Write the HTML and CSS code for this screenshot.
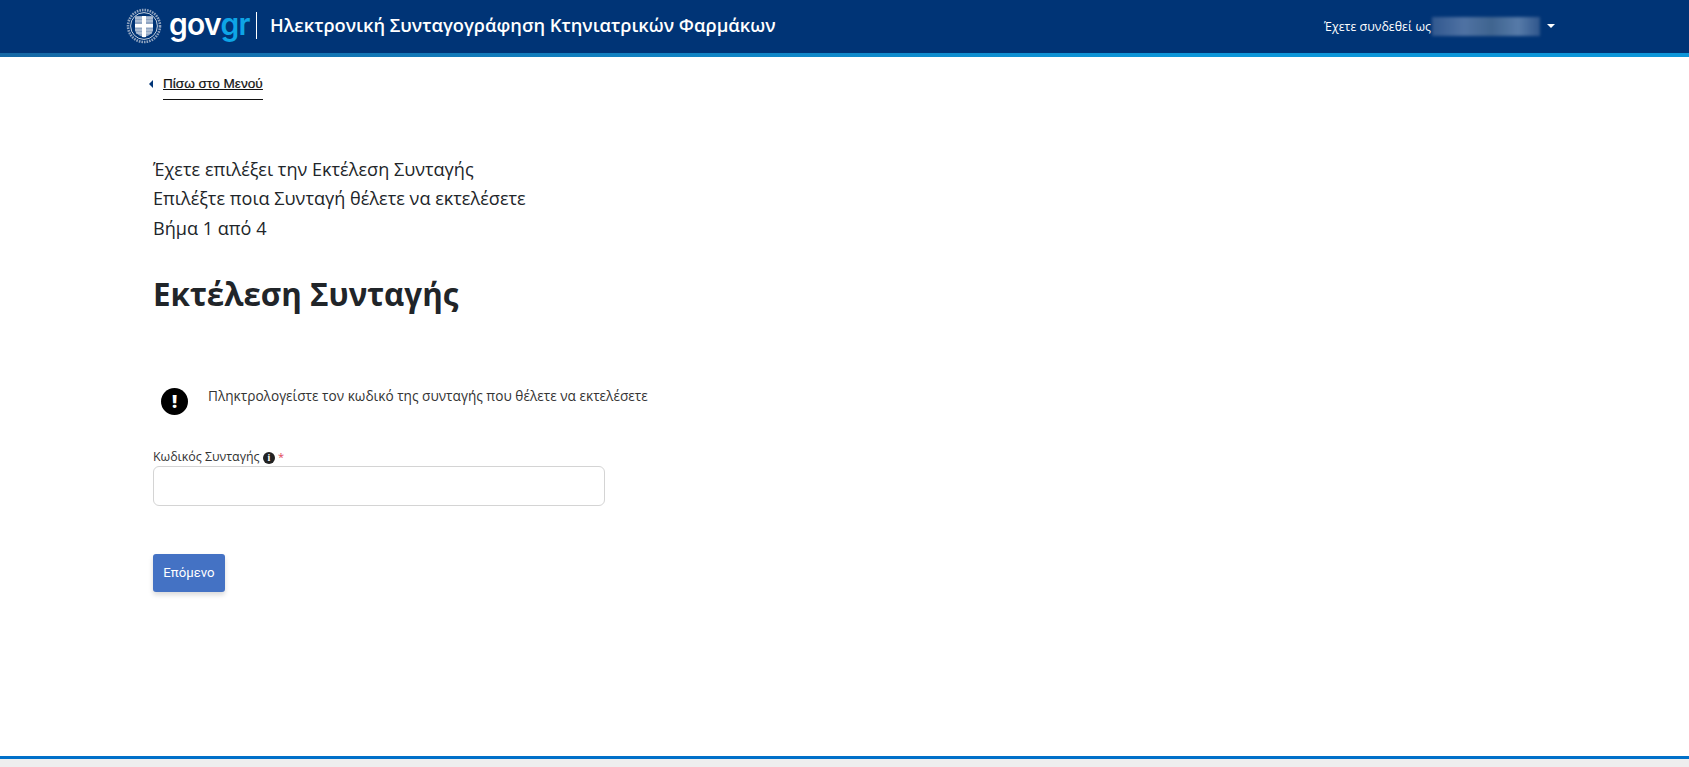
FILE: index.html
```html
<!DOCTYPE html>
<html>
<head>
    <title>Ηλεκτρονική Συνταγογράφηση Κτηνιατρικών Φαρμάκων</title>
    <meta charset="utf-8">
    <meta name="viewport" content="width=device-width, initial-scale=1">
    <link rel="stylesheet" href="styles.css">
</head>
<body>
    <header class="topbar">
        <div class="brand">
            <svg class="emblem" viewBox="0 0 36 36" width="36" height="36">
                <circle cx="18" cy="18" r="16" fill="none" stroke="#8fa3bf" stroke-width="2.6" stroke-dasharray="1.6 1"/>
                <circle cx="18" cy="18" r="13.4" fill="none" stroke="#c3cfde" stroke-width="1"/>
                <path d="M9 8h18v14c0 3-4 6-9 7-5-1-9-4-9-7z" fill="#8ea4c2"/>
                <path d="M9 10h18M9 13h18M9 22h18M10 25h16" stroke="#c9d4e3" stroke-width="1"/>
                <path d="M16 8h4v8h7v3.500h-7V29l-2 .3-2-.3v-9.500H9V16h7z" fill="#fff"/>
            </svg>
            <div class="logo-text">gov<span>gr</span></div>
            <div class="divider"></div>
            <div class="brand-title">Ηλεκτρονική Συνταγογράφηση Κτηνιατρικών Φαρμάκων</div>
        </div>
        <div class="user-menu">
            <span>Έχετε συνδεθεί ως</span>
            <span class="user-name"></span>
            <span class="caret-down"></span>
        </div>
    </header>

    <main class="content">
        <div class="back-row">
            <span class="caret-left"></span>
            <a class="back-link" href="#"><span>Πίσω στο Μενού</span></a>
        </div>

        <div class="steps">
            <p>Έχετε επιλέξει την Εκτέλεση Συνταγής</p>
            <p>Επιλέξτε ποια Συνταγή θέλετε να εκτελέσετε</p>
            <p>Βήμα 1 από 4</p>
        </div>

        <h1>Εκτέλεση Συνταγής</h1>

        <div class="notice">
            <div class="notice-icon">!</div>
            <p>Πληκτρολογείστε τον κωδικό της συνταγής που θέλετε να εκτελέσετε</p>
        </div>

        <form class="rx-form">
            <label for="code">Κωδικός Συνταγής <span class="info-icon">i</span> <span class="required">*</span></label>
            <input type="text" id="code" name="code">
            <button type="submit">Επόμενο</button>
        </form>
    </main>

    <footer class="footer"></footer>
</body>
</html>
```

FILE: styles.css
```css
html, body {
    height: 100%;
}
body {
    margin: 0;
    font-family: "Open Sans", "Noto Sans", sans-serif;
    color: #212529;
    background-color: #fff;
    display: flex;
    flex-direction: column;
    overflow: hidden;
}
.topbar {
    box-sizing: border-box;
    height: 57px;
    flex: none;
    display: flex;
    justify-content: space-between;
    align-items: center;
    padding: 0 134px 2px 126px;
    background-color: #003476;
    border-bottom: 4px solid #0d8fd6;
    border-image: linear-gradient(to right, #1568a5, #0d96d9 70%) 1;
    color: white;
}
.brand {
    display: flex;
    align-items: center;
}
.emblem {
    margin-right: 7px;
}
.logo-text {
    font-family: "Inter", "Open Sans", sans-serif;
    font-size: 30px;
    font-weight: 600;
    line-height: 30px;
    letter-spacing: -0.7px;
    width: 87px;
    margin-top: -4px;
}
.logo-text span {
    color: #0ea5e6;
}
.divider {
    width: 1px;
    height: 27px;
    background-color: white;
}
.brand-title {
    margin: 0 0 3px 13px;
    font-size: 18.3px;
    font-weight: 600;
}
.user-menu {
    display: flex;
    align-items: center;
    margin-top: 2px;
    font-size: 12.4px;
}
.user-name {
    width: 108px;
    height: 19px;
    margin: 0 7px 0 1px;
    background: linear-gradient(to right, #31588f, #4f72a3 30%, #3f648f 55%, #567aa8 80%, #2f568c);
    filter: blur(1.5px);
}
.caret-down {
    width: 0;
    height: 0;
    border-left: 4px solid transparent;
    border-right: 4px solid transparent;
    border-top: 4px solid white;
    margin-bottom: 2px;
}
.content {
    flex: 1;
    padding: 0 0 0 153px;
}
.back-row {
    display: flex;
    align-items: flex-start;
    margin: 19px 0 0 -4px;
}
.caret-left {
    width: 0;
    height: 0;
    border-top: 4px solid transparent;
    border-bottom: 4px solid transparent;
    border-right: 4px solid #003476;
    margin: 4px 10px 0 0;
}
.back-link {
    display: block;
    font-family: "Liberation Sans", Arial, sans-serif;
    font-size: 13.6px;
    line-height: 16px;
    color: #111;
    padding-bottom: 7px;
    border-bottom: 1px solid #111;
    -webkit-text-stroke: 0.2px #111;
}
.back-link span {
    text-decoration: underline;
}
.steps {
    margin-top: 55px;
}
.steps p {
    margin: 0;
    font-size: 18.1px;
    font-weight: 400;
    line-height: 29.3px;
}
h1 {
    margin: 29px 0 0;
    font-size: 31.3px;
    font-weight: 700;
    line-height: 44px;
}
.notice {
    display: flex;
    align-items: flex-start;
    margin: 72px 0 0 8px;
}
.notice-icon {
    width: 27px;
    height: 27px;
    border-radius: 50%;
    background-color: black;
    color: white;
    font-size: 18px;
    font-weight: 800;
    line-height: 27px;
    text-align: center;
    margin-right: 20px;
}
.notice p {
    margin: 0;
    font-size: 13.65px;
    line-height: 16px;
    color: #333;
}
.rx-form {
    display: flex;
    flex-direction: column;
    align-items: flex-start;
    margin-top: 34px;
}
.rx-form label {
    font-size: 12.4px;
    line-height: 16px;
    color: #333;
}
.info-icon {
    display: inline-block;
    width: 12px;
    height: 12px;
    border-radius: 50%;
    background-color: #222;
    color: white;
    font-family: "Liberation Serif", serif;
    font-size: 10px;
    font-weight: 700;
    line-height: 12px;
    text-align: center;
}
.required {
    color: #e0445a;
    font-size: 11px;
}
.rx-form input {
    box-sizing: border-box;
    width: 452px;
    height: 40px;
    margin-top: 1px;
    border: 1px solid #d4d4d4;
    border-radius: 6px;
}
.rx-form button {
    width: 72px;
    height: 38px;
    margin-top: 48px;
    background-color: #4472c4;
    color: white;
    border: none;
    border-radius: 3px;
    font-family: Roboto, Arial, sans-serif;
    font-size: 13.2px;
    box-shadow: 0 3px 5px rgba(0,0,0,0.15);
}
.footer {
    flex: none;
    height: 8px;
    border-top: 3px solid #0070c9;
    background-color: #eeeeee;
}
```
